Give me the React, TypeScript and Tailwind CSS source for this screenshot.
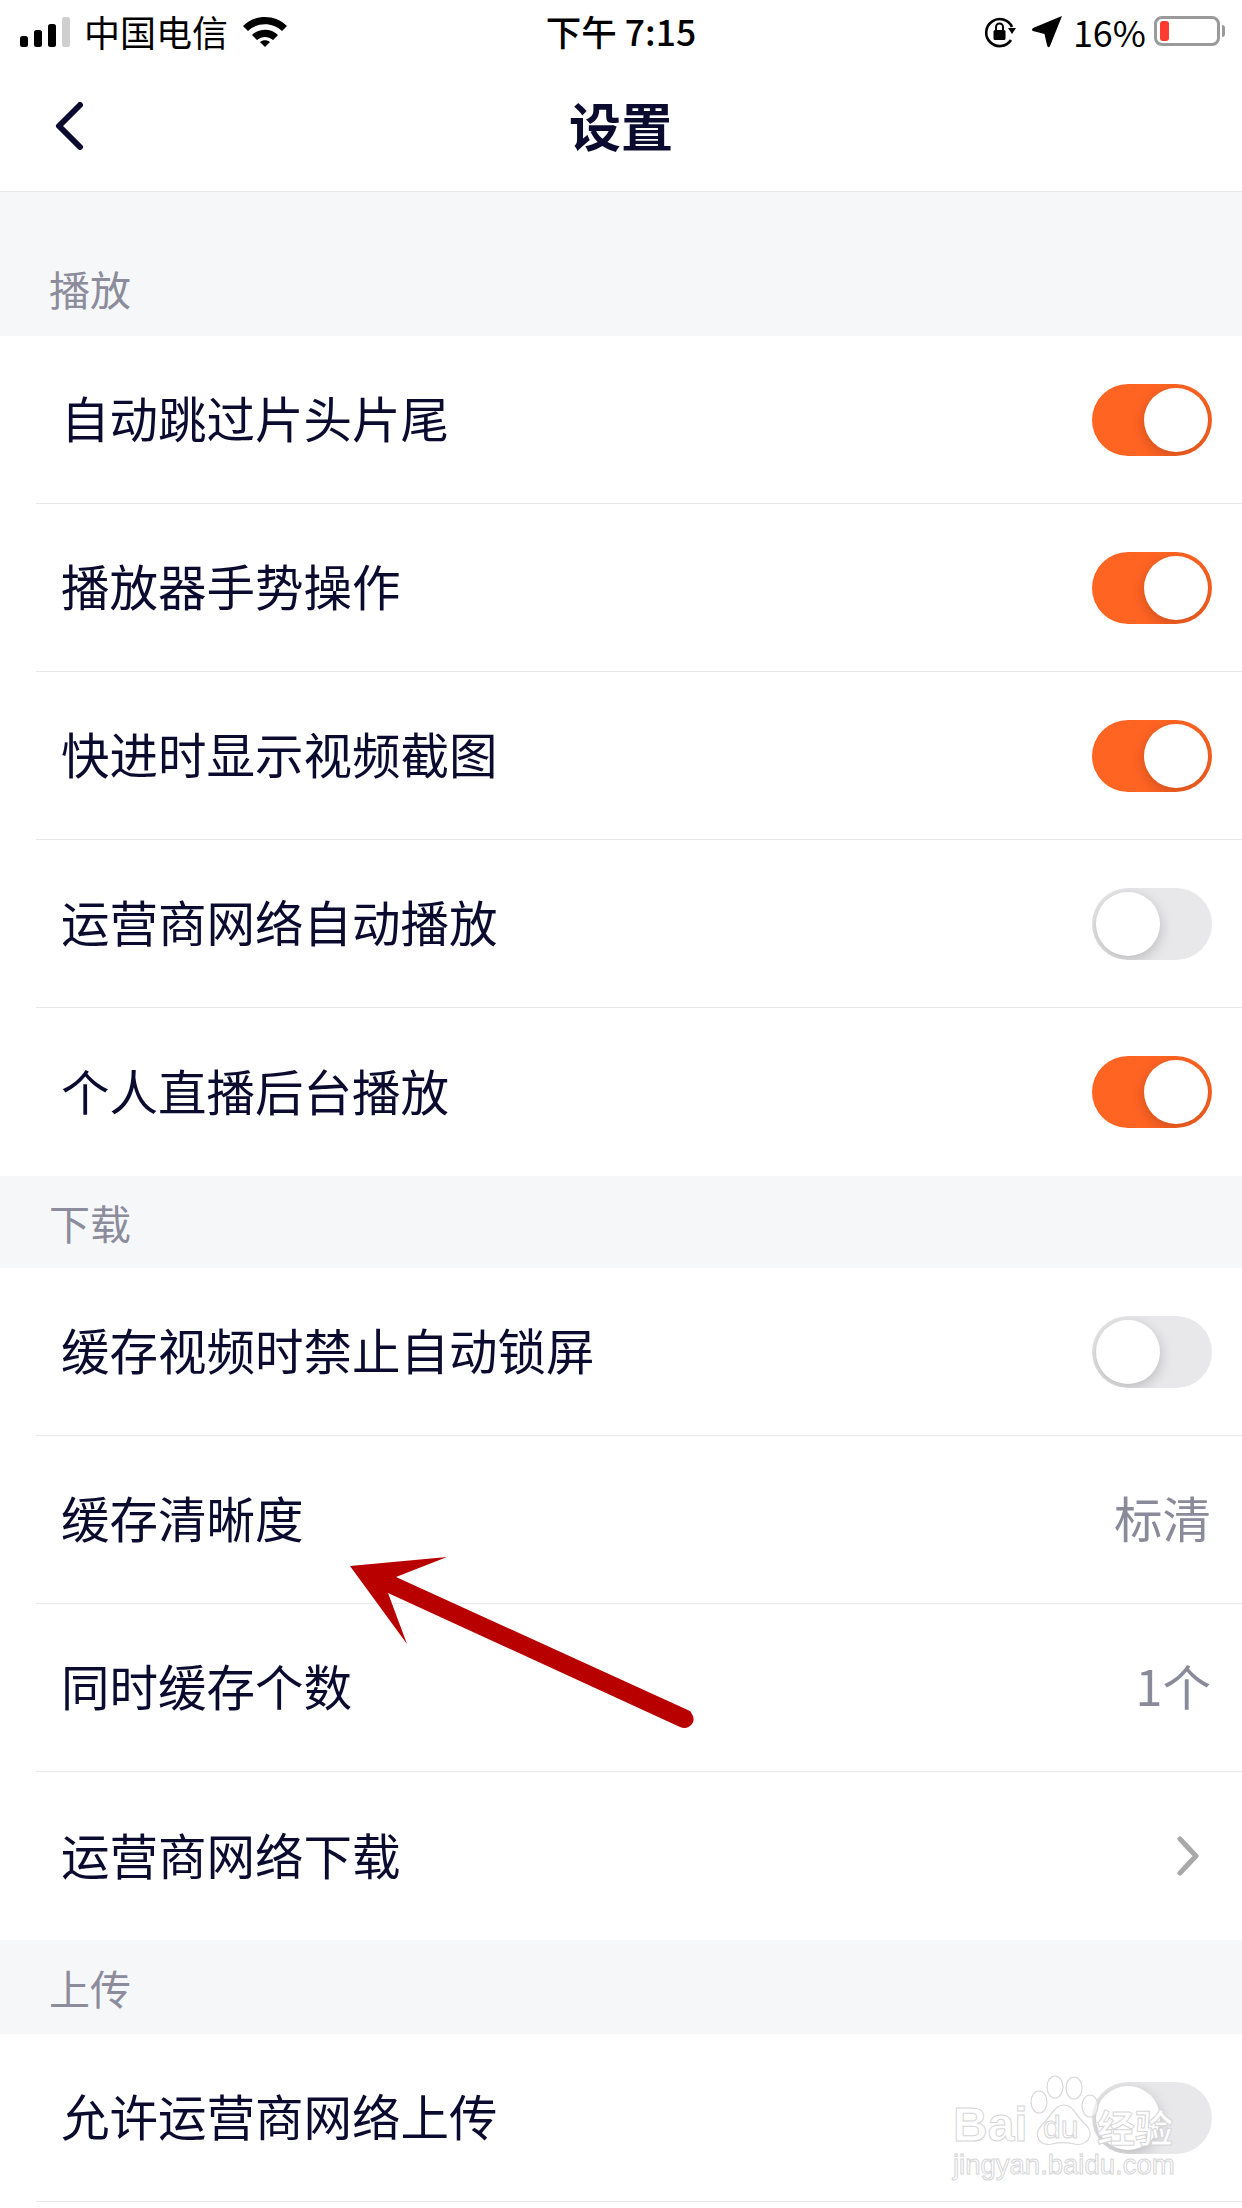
const cjk = "font-['Noto_Sans_CJK_SC','Liberation_Sans',sans-serif]";

type Row = { label: string; on?: boolean; value?: string; arrow?: boolean; last?: boolean };

const sections: { title: string; head: string; rows: Row[] }[] = [
  {
    title: "播放",
    head: "h-[144px] pt-[48px]",
    rows: [
      { label: "自动跳过片头片尾", on: true },
      { label: "播放器手势操作", on: true },
      { label: "快进时显示视频截图", on: true },
      { label: "运营商网络自动播放", on: false },
      { label: "个人直播后台播放", on: true, last: true },
    ],
  },
  {
    title: "下载",
    head: "h-[92px]",
    rows: [
      { label: "缓存视频时禁止自动锁屏", on: false },
      { label: "缓存清晰度", value: "标清" },
      { label: "同时缓存个数", value: "1个" },
      { label: "运营商网络下载", arrow: true, last: true },
    ],
  },
  {
    title: "上传",
    head: "h-[94px]",
    rows: [{ label: "允许运营商网络上传", on: false }],
  },
];

function Toggle({ on }: { on: boolean }) {
  return (
    <div
      className={
        on
          ? "flex h-[72px] w-[120px] justify-end overflow-hidden rounded-full bg-[#ff6423] p-[4px]"
          : "flex h-[72px] w-[120px] justify-start overflow-hidden rounded-full bg-[#e8e8ea] p-[4px]"
      }
    >
      <div className="h-[64px] w-[64px] rounded-full bg-white shadow-[0_4px_14px_rgba(0,0,0,0.2)]" />
    </div>
  );
}

function SettingRow({ row }: { row: Row }) {
  return (
    <div
      className={
        row.last
          ? "ml-[36px] flex h-[168px] items-center justify-between pl-[25px] pr-[30px]"
          : "ml-[36px] flex h-[168px] items-center justify-between border-b border-[#e8e8ea] pl-[25px] pr-[30px]"
      }
    >
      <span className="pb-[4px] text-[48.5px] leading-none text-[#0b0b30]">{row.label}</span>
      {row.on !== undefined && <Toggle on={row.on} />}
      {row.value && <span className="pb-[4px] pr-[1px] text-[48.5px] leading-none text-[#8a8a9a]">{row.value}</span>}
      {row.arrow && (
        <svg width="24" height="40" viewBox="0 0 24 40" className="mr-[12px]" fill="none">
          <path d="M4 3 L20 20 L4 37" stroke="#a8a8a8" strokeWidth="5" strokeLinecap="round" strokeLinejoin="round" />
        </svg>
      )}
    </div>
  );
}

function StatusBar() {
  return (
    <div className="grid h-[64px] grid-cols-[1fr_auto_1fr] items-center text-black">
      <div className="flex items-center pl-[20px]">
        <svg width="52" height="30" viewBox="0 0 52 30">
          <rect x="0" y="19" width="8" height="11" rx="2.5" fill="#000" />
          <rect x="14" y="13" width="8" height="17" rx="2.5" fill="#000" />
          <rect x="28" y="7" width="8" height="23" rx="2.5" fill="#000" />
          <rect x="42" y="0" width="8" height="30" rx="2.5" fill="#cfcfcf" />
        </svg>
        <span className="ml-[12px] pb-[3px] text-[36px] leading-none">中国电信</span>
        <svg width="48" height="32" viewBox="0 0 48 32" className="mb-[3px] ml-[13px]" fill="none">
          <path d="M2 11 C14 -1 34 -1 46 11 L41 16 C32 7 16 7 7 16 Z" fill="#000" />
          <path d="M11 20 C18 13 30 13 37 20 L32 25 C27 21 21 21 16 25 Z" fill="#000" />
          <path d="M19 27 C22 24.5 26 24.5 29 27 L24 32 Z" fill="#000" />
        </svg>
      </div>
      <div className="pb-[3px] text-[35.5px] font-medium leading-none">下午 7:15</div>
      <div className="flex items-center justify-end pr-[17px]">
        <svg width="34" height="34" viewBox="0 0 34 34" fill="none">
          <path d="M29 12 A13.5 13.5 0 1 0 28 25" stroke="#000" strokeWidth="2.6" />
          <path d="M25 13 L33 13 L29 19 Z" fill="#000" />
          <rect x="10.5" y="15" width="12" height="10" rx="1.5" fill="#000" />
          <path d="M13 15 V12 a3.5 3.5 0 0 1 7 0 V15" stroke="#000" strokeWidth="2" />
        </svg>
        <svg width="30" height="32" viewBox="0 0 30 32" className="ml-[15px]">
          <path d="M30 0 L18 30 Q16 33 15 29 L12.5 18 L1 15 Q-1 14 1 12 Z" fill="#000" />
        </svg>
        <span className="ml-[11px] pb-[3px] text-[36px] leading-none">16%</span>
        <div className="mb-[3px] ml-[8px] flex h-[30px] w-[66px] items-center rounded-[8px] border-[3px] border-[#9a9a9a] px-[3px]">
          <div className="h-[20px] w-[9px] rounded-[3px] bg-[#ff3b30]" />
        </div>
        <div className="mb-[3px] ml-[2px] h-[12px] w-[3px] rounded-r-full bg-[#9a9a9a]" />
      </div>
    </div>
  );
}

function Watermark() {
  return (
    <div className="absolute left-[953px] top-[2075px] h-[112px] w-[224px] text-white [-webkit-text-stroke:1px_#d6d6d8]">
      <svg width="90" height="76" viewBox="0 0 90 76" className="absolute left-[77px] top-0" fill="rgba(255,255,255,0.5)" stroke="#d8d8da" strokeWidth="1.2">
        <ellipse cx="25" cy="12" rx="8" ry="11" />
        <ellipse cx="44" cy="13" rx="8" ry="11" />
        <ellipse cx="9" cy="27" rx="8" ry="11" />
        <ellipse cx="60" cy="31" rx="8" ry="11" />
        <path d="M34 30 C44 30 46 42 56 50 C66 60 56 72 44 69 C36 67 30 67 22 69 C10 72 2 60 12 50 C20 43 24 30 34 30 Z" />
      </svg>
      <span className="absolute left-0 top-[26px] font-['Liberation_Sans',sans-serif] text-[48px] font-bold leading-none">Bai</span>
      <span className="absolute left-[90px] top-[36px] font-['Liberation_Sans',sans-serif] text-[32px] leading-none">du</span>
      <span className="absolute left-[144px] top-[32px] text-[38px] font-bold leading-none">经验</span>
      <span className="absolute left-0 top-[76px] whitespace-nowrap font-['Liberation_Sans',sans-serif] text-[27.5px] leading-none">jingyan.baidu.com</span>
    </div>
  );
}

export default function App() {
  return (
    <div className={`relative h-[2208px] w-[1242px] overflow-hidden bg-white ${cjk}`}>
      <StatusBar />
      <div className="relative flex h-[128px] items-center justify-center border-b border-[#e9e9eb]">
        <svg width="32" height="48" viewBox="0 0 32 48" className="absolute left-[54px] top-[38px]" fill="none">
          <path d="M26 3 L5 24 L26 45" stroke="#0b0b30" strokeWidth="6" strokeLinecap="round" strokeLinejoin="round" />
        </svg>
        <span className="pb-[6px] text-[52px] font-bold leading-none text-[#0b0b30]">设置</span>
      </div>

      {sections.map((s) => (
        <div key={s.title}>
          <div className={`flex items-center bg-[#f6f7f9] pl-[49px] text-[41px] leading-none text-[#8c8c9c] ${s.head}`}>
            {s.title}
          </div>
          {s.rows.map((row) => (
            <SettingRow key={row.label} row={row} />
          ))}
        </div>
      ))}

      {/* red annotation arrow */}
      <svg width="1242" height="2208" viewBox="0 0 1242 2208" className="pointer-events-none absolute left-0 top-0">
        <path d="M350 1566 L447 1557 L396 1577 L690 1711 Q696 1719 692 1724 Q687 1730 680 1727 L388 1593 L407 1644 Z" fill="#b90000" />
      </svg>
      <Watermark />
    </div>
  );
}
